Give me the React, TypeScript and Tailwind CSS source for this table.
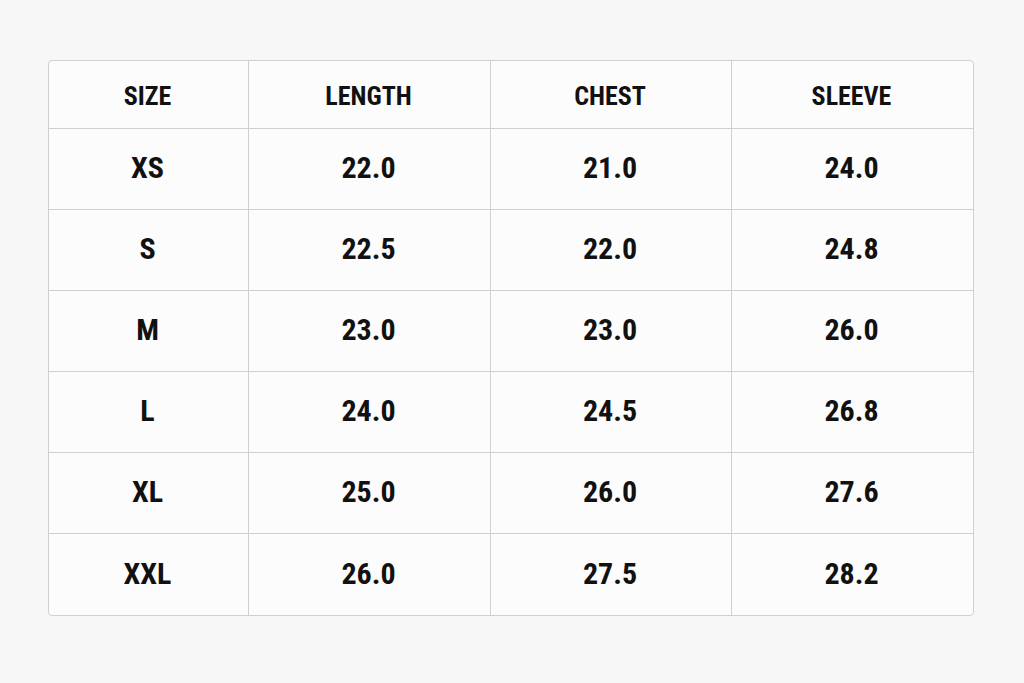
import React from 'react';

const headers = ['SIZE', 'LENGTH', 'CHEST', 'SLEEVE'];

const rows: string[][] = [
  ['XS', '22.0', '21.0', '24.0'],
  ['S', '22.5', '22.0', '24.8'],
  ['M', '23.0', '23.0', '26.0'],
  ['L', '24.0', '24.5', '26.8'],
  ['XL', '25.0', '26.0', '27.6'],
  ['XXL', '26.0', '27.5', '28.2'],
];

const cols = ['w-[200px]', 'w-[242px]', 'w-[241px]', 'flex-1'];

export default function App() {
  return (
    <div className="w-[1024px] h-[683px] bg-[#f7f7f7] pt-[60px] pl-[48px] font-['Roboto',sans-serif] text-[#111]">
      <div className="w-[926px] rounded-[4px] border border-[#d0d0d0] bg-[#fcfcfc] overflow-hidden">
        {/* Header */}
        <div className="flex h-[68px] border-b border-[#d0d0d0]">
          {headers.map((h, i) => (
            <div
              key={h}
              className={`${cols[i]} flex items-center justify-center pt-[3px] pr-[2px] font-bold text-[26px] font-stretch-condensed ${i < 3 ? 'border-r border-[#d0d0d0]' : ''}`}
            >
              {h}
            </div>
          ))}
        </div>

        {/* Body */}
        {rows.map((r, ri) => (
          <div
            key={r[0]}
            className={`flex h-[81px] ${ri < rows.length - 1 ? 'border-b border-[#d0d0d0]' : ''}`}
          >
            {r.map((c, i) => (
              <div
                key={i}
                className={`${cols[i]} flex items-center justify-center pb-[3px] pr-[2px] font-bold text-[30px] font-stretch-condensed ${i < 3 ? 'border-r border-[#d0d0d0]' : ''}`}
              >
                {c}
              </div>
            ))}
          </div>
        ))}
      </div>
    </div>
  );
}
